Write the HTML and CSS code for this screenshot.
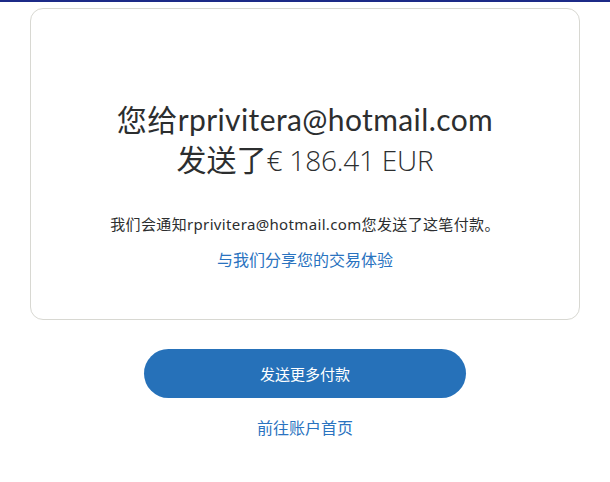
FILE: index.html
```html
<!DOCTYPE html>
<html lang="zh">
<head>
<meta charset="utf-8">
<link rel="stylesheet" href="styles.css">
</head>
<body>
<div class="topbar"></div>
<main class="page">
  <section class="card">
    <h1 class="headline">
      <span class="line email">您给rprivitera@hotmail.com</span>
      <span class="line">发送了<span class="amount">€ 186.41 EUR</span></span>
    </h1>
    <p class="notice">我们会通知rprivitera@hotmail.com您发送了这笔付款。</p>
    <a class="link share" href="#">与我们分享您的交易体验</a>
  </section>
  <a class="btn" href="#">发送更多付款</a>
  <a class="link home" href="#">前往账户首页</a>
</main>
</body>
</html>
```
FILE: styles.css
```css
html, body {
  margin: 0;
  padding: 0;
  background: #ffffff;
}
body {
  font-family: "Noto Sans", "Noto Sans CJK SC", sans-serif;
  color: #2c2e2f;
}
.topbar {
  height: 2px;
  background: #1c2a87;
}
.page {
  display: flex;
  flex-direction: column;
  align-items: center;
}
.card {
  box-sizing: border-box;
  width: 550px;
  height: 312px;
  margin-top: 6px;
  border: 1px solid #d8d8d2;
  border-radius: 13px;
  display: flex;
  flex-direction: column;
  align-items: center;
  padding-top: 90px;
}
.headline {
  margin: 0;
  font-weight: 400;
  font-size: 30px;
  line-height: 40px;
  text-align: center;
  color: #2c2e2f;
  font-family: "Lato", "Noto Sans CJK SC", sans-serif;
}
.line {
  display: block;
}
.email {
  letter-spacing: 0.4px;
}
.amount {
  font-family: "Open Sans", sans-serif;
  font-weight: 300;
  font-size: 28px;
  letter-spacing: -0.2px;
}
.notice {
  margin: 34px 0 0;
  font-size: 15px;
  line-height: 20px;
  text-align: center;
  letter-spacing: 0.35px;
}
.link {
  color: #2a73c0;
  text-decoration: none;
  font-size: 16px;
  line-height: 20px;
}
.share {
  margin-top: 16px;
}
.btn {
  margin-top: 29px;
  width: 322px;
  height: 49px;
  border-radius: 25px;
  background: #2671b9;
  color: #ffffff;
  text-decoration: none;
  font-size: 15px;
  display: flex;
  align-items: center;
  justify-content: center;
}
.home {
  margin-top: 20px;
}
```
